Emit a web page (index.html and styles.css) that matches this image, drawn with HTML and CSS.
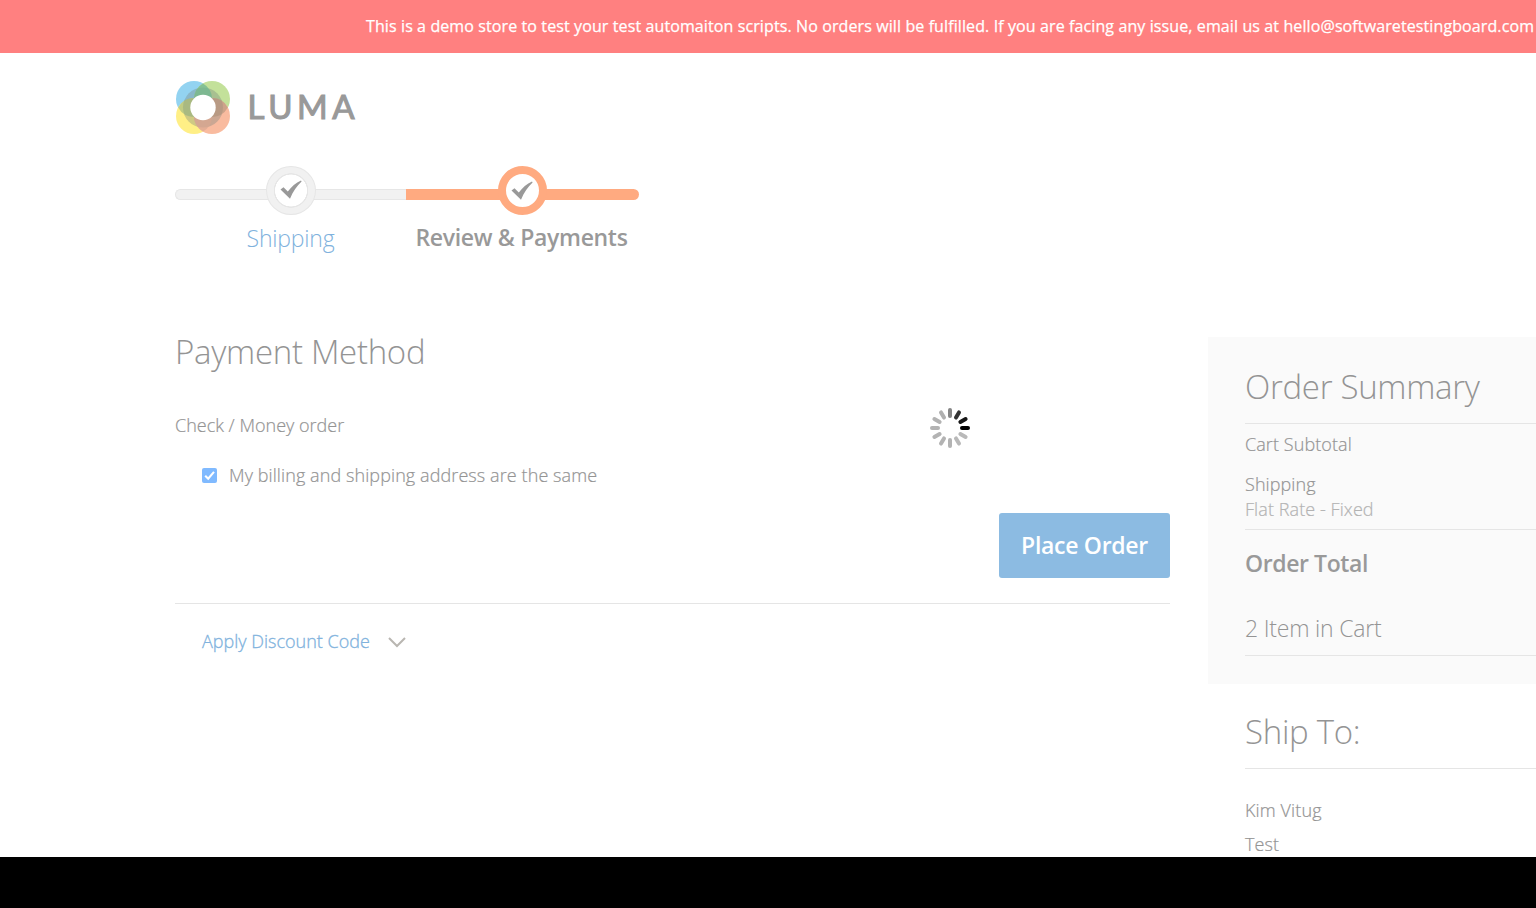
FILE: index.html
```html
<!DOCTYPE html>
<html lang="en">
<head>
<meta charset="utf-8">
<title>Checkout</title>
<link rel="stylesheet" href="styles.css">
</head>
<body>
<div class="page">
  <div class="notice"><span>This is a demo store to test your test automaiton scripts. No orders will be fulfilled. If you are facing any issue, email us at hello@softwaretestingboard.com</span></div>
  <header class="header">
    <svg class="logo" width="190" height="56" viewBox="0 0 190 56">
      <g transform="translate(1 1)">
        <circle cx="18" cy="18" r="18" fill="#93d3f1"/>
        <circle cx="36" cy="18" r="18" fill="#c3e19a"/>
        <circle cx="18" cy="35" r="18" fill="#ffef86"/>
        <circle cx="36" cy="35" r="18" fill="#f9bb9f"/>
        <circle cx="27" cy="26.500" r="20" fill="#7b8580" fill-opacity=".36"/>
        <path d="M27 2.400a18 18 0 0 1 0 31.200a18 18 0 0 1 0-31.200" fill="#6fb592" fill-opacity=".75"/>
        <path d="M27 19.400a18 18 0 0 1 0 31.200a18 18 0 0 1 0-31.200" fill="#d8a890" fill-opacity=".65"/>
        <path d="M2.200 26.500a18 18 0 0 1 31.600 0a18 18 0 0 1-31.600 0" fill="#84a980" fill-opacity=".5"/>
        <path d="M20.200 26.500a18 18 0 0 1 31.600 0a18 18 0 0 1-31.600 0" fill="#a98f78" fill-opacity=".55"/>
        <circle cx="27" cy="26.500" r="12.700" fill="#fff"/>
      </g>
      <text class="brand" x="72.500" y="39" textLength="107" lengthAdjust="spacing">LUMA</text>
    </svg>
  </header>
  <ol class="progress">
    <li class="step"><div class="track"><span class="dot"><svg width="24" height="20" viewBox="0 0 24 20"><path d="M1.500 9.500l3-2.300 4.300 4.400C12.200 7 17 2.700 22 .6l.6 1C18 6 14 11.500 11 18.700z"/></svg></span></div><span class="label">Shipping</span></li>
    <li class="step active"><div class="track"><span class="dot"><svg width="24" height="20" viewBox="0 0 24 20"><path d="M1.500 9.500l3-2.300 4.300 4.400C12.200 7 17 2.700 22 .6l.6 1C18 6 14 11.500 11 18.700z"/></svg></span></div><span class="label">Review &amp; Payments</span></li>
  </ol>
  <div class="columns">
    <main class="payment">
      <h1 class="title">Payment Method</h1>
      <div class="method">Check / Money order</div>
      <label class="same"><span class="check"><svg width="15" height="15" viewBox="0 0 15 15"><path d="M3.200 7.700l3 3L12 3.900" fill="none" stroke="#fff" stroke-width="2.100"/></svg></span><span class="same-text">My billing and shipping address are the same</span></label>
      <div class="actions"><button class="place" type="button">Place Order</button></div>
      <div class="discount"><span>Apply Discount Code</span><svg width="18" height="12" viewBox="0 0 18 12"><path d="M1 2l8 8 8-8" fill="none" stroke="#b9b6b1" stroke-width="2"/></svg></div>
    </main>
    <aside class="sidebar">
      <section class="summary">
        <h2 class="title ruled">Order Summary</h2>
        <div class="row subtotal">Cart Subtotal</div>
        <div class="row">Shipping</div>
        <div class="row rate">Flat Rate - Fixed</div>
        <div class="total">Order Total</div>
        <div class="items">2 Item in Cart</div>
      </section>
      <section class="ship">
        <h2 class="title ship-title">Ship To:</h2>
        <div class="address">Kim Vitug<br>Test</div>
      </section>
    </aside>
  </div>
  <svg class="spinner" width="44" height="44" viewBox="-22 -22 44 44">
    <g stroke-width="4" stroke-linecap="round">
      <path d="M0-12V-18" stroke="#858585"/>
      <path d="M0-12V-18" stroke="#333" transform="rotate(30)"/>
      <path d="M0-12V-18" stroke="#161616" transform="rotate(60)"/>
      <path d="M0-12V-18" stroke="#000" transform="rotate(90)"/>
      <path d="M0-12V-18" stroke="#b9b9b9" transform="rotate(120)"/>
      <path d="M0-12V-18" stroke="#b9b9b9" transform="rotate(150)"/>
      <path d="M0-12V-18" stroke="#b3b3b3" transform="rotate(180)"/>
      <path d="M0-12V-18" stroke="#b3b3b3" transform="rotate(210)"/>
      <path d="M0-12V-18" stroke="#b3b3b3" transform="rotate(240)"/>
      <path d="M0-12V-18" stroke="#b3b3b3" transform="rotate(270)"/>
      <path d="M0-12V-18" stroke="#b3b3b3" transform="rotate(300)"/>
      <path d="M0-12V-18" stroke="#b0b0b0" transform="rotate(330)"/>
    </g>
  </svg>
</div>
<div class="bottom"></div>
</body>
</html>
```
FILE: styles.css
```css
* { box-sizing: border-box; }
body { margin: 0; width: 1536px; height: 908px; overflow: hidden; background: #fff; font-family: "Open Sans", sans-serif; font-weight: 300; font-size: 18px; color: #949494; }
.page { position: relative; height: 857px; overflow: hidden; }
.notice { height: 53px; padding-left: 366px; background: #ff8080; color: #fff; font-size: 16px; font-weight: 400; letter-spacing: .107px; line-height: 53px; white-space: nowrap; -webkit-text-stroke: .25px #fff; }
.header { height: 113px; padding: 27px 0 0 175px; }
.logo { display: block; }
.brand { font-family: Lato, sans-serif; font-weight: 400; font-size: 33px; fill: #999; stroke: #999; stroke-width: 1.1px; }
.progress { display: flex; margin: 0; padding: 0 0 0 175px; list-style: none; height: 171px; }
.step { width: 231px; text-align: center; }
.step.active { width: 233px; }
.track { height: 11px; margin-top: 23px; display: flex; align-items: center; justify-content: center; background: #f1f1f1; border: 1px solid #e6e6e6; border-right: 0; border-radius: 6px 0 0 6px; }
.active .track { background: #ffaa80; border: 0; border-radius: 0 6px 6px 0; }
.dot { flex: none; width: 50px; height: 49px; margin-bottom: 9px; border: 1px solid #e6e6e6; border-radius: 50%; background: radial-gradient(circle, #fff 15.700px, #e6e6e6 16.200px, #e6e6e6 17px, #f1f1f1 17.500px); display: flex; align-items: center; justify-content: center; }
.dot path { fill: #999; }
.active .dot { width: 49px; margin-bottom: 8px; border: 8px solid #ffaa80; background: #fff; }
.active .dot svg { margin-right: 1px; }
.label { display: block; margin-top: 22px; font-size: 23px; line-height: 32px; letter-spacing: -.2px; color: #80b2dd; }
.active .label { margin-top: 21px; padding-right: 2px; font-weight: 600; letter-spacing: -.32px; color: #999; }
.columns { display: flex; }
.payment { width: 995px; margin-left: 175px; }
.title { margin: 0; font-size: 33px; font-weight: 300; line-height: 46px; letter-spacing: -.3px; white-space: nowrap; }
.payment .title { margin-top: -8px; }
.method, .same-text, .row, .address { -webkit-text-stroke: .2px currentColor; }
.method { margin-top: 37px; line-height: 26px; }
.same { display: flex; align-items: center; margin: 24px 0 0 27px; line-height: 26px; }
.same-text { letter-spacing: .09px; }
.check { width: 15px; height: 15px; margin-top: 1px; border-radius: 2px; background: #80baff; margin-right: 12px; }
.check svg { display: block; }
.actions { display: flex; justify-content: flex-end; padding: 25px 0 25px; border-bottom: 1px solid #e5e5e5; }
.place { width: 171px; height: 65px; padding: 0; border: 0; border-radius: 3px; background: #8cbbe2; color: #fff; font: 600 23px/65px "Open Sans", sans-serif; letter-spacing: -.3px; }
.discount { display: flex; align-items: center; padding: 24px 0 0 27px; line-height: 26px; color: #80b2dd; }
.discount span { width: 169px; white-space: nowrap; -webkit-text-stroke: .3px #80b2dd; }
.discount svg { margin: 1px 0 0 17px; }
.sidebar { flex: 1; margin-left: 38px; }
.summary { height: 347px; padding: 27px 0 0 37px; background: #fafafa; }
.ruled { height: 60px; border-bottom: 1px solid #e5e5e5; }
.row { line-height: 25px; letter-spacing: .08px; }
.subtotal { padding: 8px 0 15px; }
.rate { height: 33px; color: #b3b3b3; border-bottom: 1px solid #e5e5e5; }
.total { padding-top: 17px; font-size: 23px; line-height: 32px; letter-spacing: -.4px; font-weight: 600; color: #999; }
.items { height: 77px; padding-top: 33px; font-size: 23px; line-height: 32px; letter-spacing: -.2px; border-bottom: 1px solid #e5e5e5; }
.ship { padding-left: 37px; }
.ship-title { height: 85px; padding-top: 25px; border-bottom: 1px solid #e5e5e5; }
.address { padding-top: 24px; line-height: 34px; letter-spacing: .12px; }
.spinner { position: absolute; left: 927.500px; top: 405.500px; }
.bottom { height: 51px; background: #000; }
```
